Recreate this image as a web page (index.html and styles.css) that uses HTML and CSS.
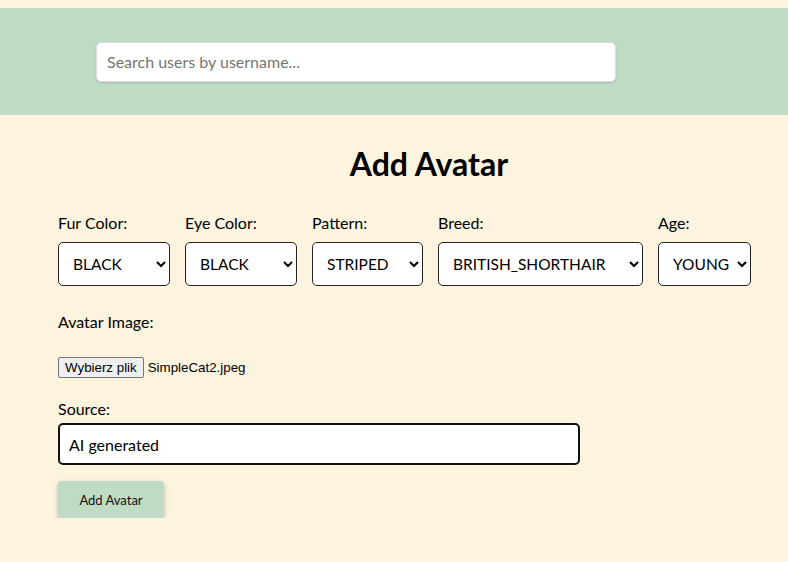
FILE: index.html
```html
<!DOCTYPE html>
<html>
<head>
<meta charset="utf-8">
<link rel="stylesheet" href="styles.css">
</head>
<body>
<header class="topbar">
  <input class="search" type="text" placeholder="Search users by username...">
</header>
<main class="page">
  <h1 class="title">Add Avatar</h1>
  <div class="selects">
    <div class="field">
      <label>Fur Color:</label>
      <select class="sel w-fur"><option>BLACK</option></select>
    </div>
    <div class="field">
      <label>Eye Color:</label>
      <select class="sel w-eye"><option>BLACK</option></select>
    </div>
    <div class="field">
      <label>Pattern:</label>
      <select class="sel w-pat"><option>STRIPED</option></select>
    </div>
    <div class="field">
      <label>Breed:</label>
      <select class="sel w-breed"><option>BRITISH_SHORTHAIR</option></select>
    </div>
    <div class="field">
      <label>Age:</label>
      <select class="sel w-age"><option>YOUNG</option></select>
    </div>
  </div>
  <div class="image-block">
    <label>Avatar Image:</label>
    <div class="file-row">
      <button class="file-btn" type="button">Wybierz plik</button>
      <span class="file-name">SimpleCat2.jpeg</span>
    </div>
  </div>
  <div class="source-block">
    <label>Source:</label>
    <input class="source" type="text" value="AI generated">
  </div>
  <button class="submit" type="button">Add Avatar</button>
</main>
</body>
</html>
```
FILE: styles.css
```css
html, body {
  margin: 0;
  padding: 0;
  background: #fcf4de;
}
body {
  font-family: Lato, "Open Sans", sans-serif;
  color: #000;
  padding-top: 8px;
}
.topbar {
  background: #c0dbc4;
  height: 107px;
  display: flex;
  align-items: center;
  padding-left: 96px;
  box-sizing: border-box;
}
.search {
  width: 520px;
  height: 40px;
  box-sizing: border-box;
  border: 1px solid #ddd;
  border-radius: 5px;
  background: #fff;
  box-shadow: 0 1px 2px rgba(0,0,0,0.15);
  padding: 0 10px;
  font-family: inherit;
  font-size: 16px;
  outline: none;
}
.search::placeholder {
  color: #757575;
}
.page {
  margin-left: 58px;
  width: 742px;
}
.title {
  text-align: center;
  font-size: 32px;
  font-weight: 700;
  margin: 30px 0 0 0;
  line-height: 38px;
}
.selects {
  display: flex;
  gap: 15px;
  margin-top: 30px;
}
.field {
  display: flex;
  flex-direction: column;
}
label {
  font-size: 16px;
  line-height: 20px;
  display: block;
}
.sel {
  margin-top: 9px;
  height: 44px;
  box-sizing: border-box;
  border: 1px solid #222;
  border-radius: 5px;
  background: #fff;
  font-family: inherit;
  font-size: 15.5px;
  padding: 0 0 0 10px;
  color: #000;
}
.w-fur { width: 112px; }
.w-eye { width: 112px; }
.w-pat { width: 111px; }
.w-breed { width: 205px; }
.w-age { width: 93px; }
.image-block {
  margin-top: 26px;
}
.file-row {
  display: flex;
  align-items: center;
  margin-top: 25px;
}
.file-btn {
  font-family: "Liberation Sans", Arial, sans-serif;
  font-size: 13.33px;
  background: #efefef;
  border: 1px solid #767676;
  border-radius: 2px;
  padding: 1px 6px;
  height: 21px;
  color: #000;
}
.file-name {
  font-family: "Liberation Sans", Arial, sans-serif;
  font-size: 13.33px;
  margin-left: 4px;
}
.source-block {
  margin-top: 21px;
}
.source {
  display: block;
  margin-top: 4px;
  width: 522px;
  height: 42px;
  box-sizing: border-box;
  border: 2px solid #111;
  border-radius: 5px;
  background: #fff;
  font-family: inherit;
  font-size: 16px;
  padding: 0 9px;
  outline: none;
}
.submit {
  margin-top: 16px;
  width: 106px;
  height: 37px;
  border: none;
  border-radius: 4px;
  background: #c0dbc4;
  box-shadow: 0 2px 5px rgba(0,0,0,0.25);
  font-family: inherit;
  font-size: 13px;
  color: #111;
}
```
